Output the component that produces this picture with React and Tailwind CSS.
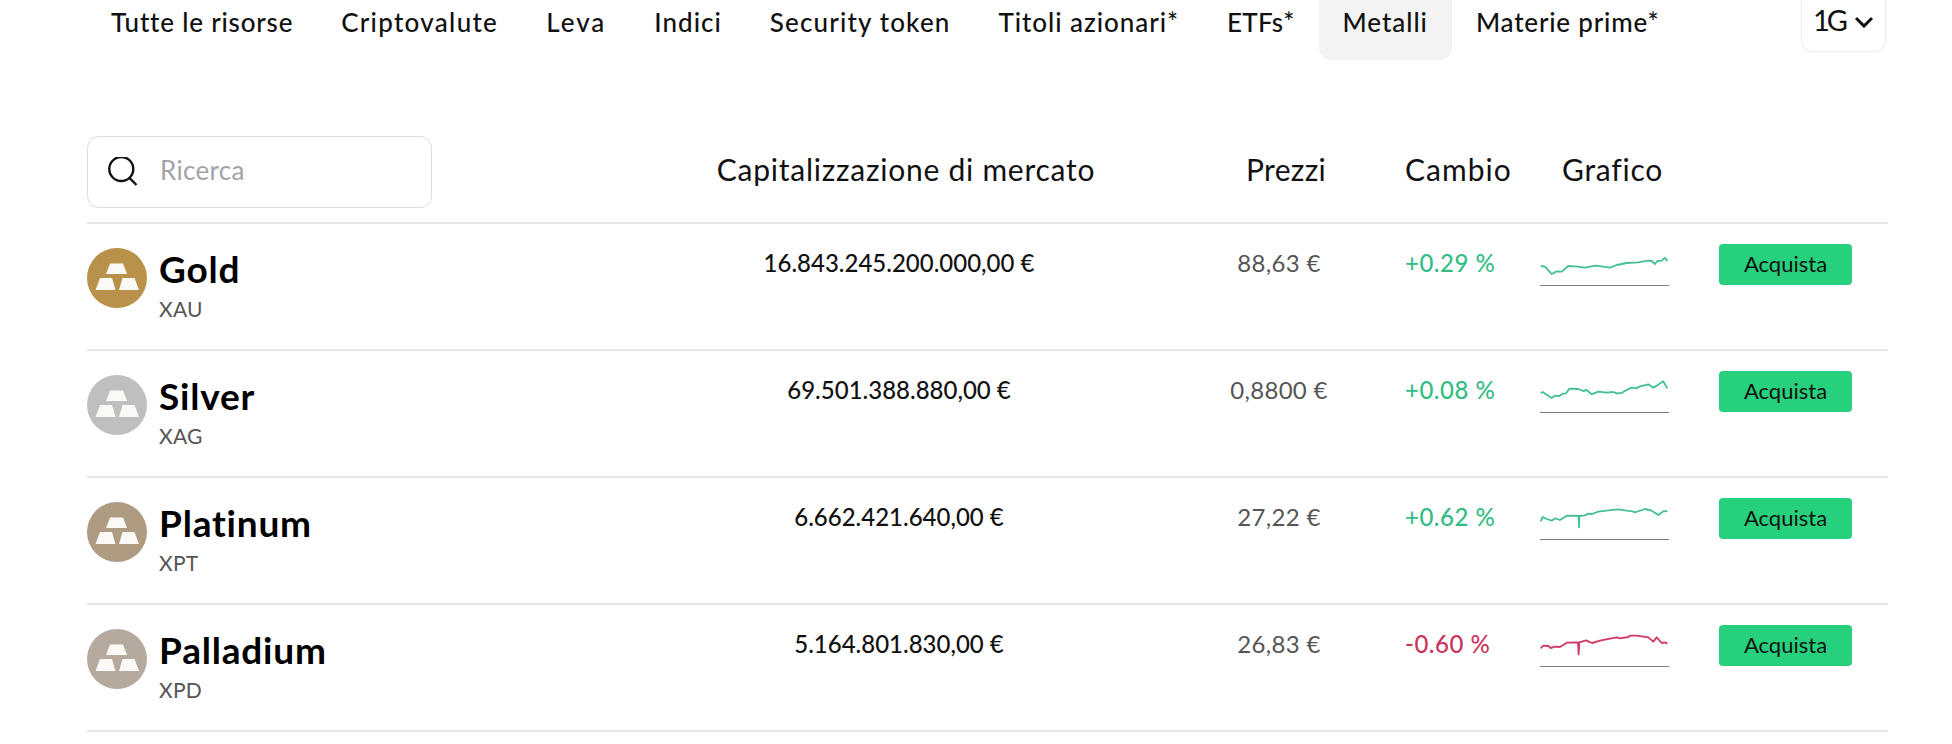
import React from "react";

// tracking differs per tab so the labels keep the widths of the original typeface
const tabs = [
  { label: "Tutte le risorse", track: "tracking-[0.8px]" },
  { label: "Criptovalute", track: "tracking-[1.3px]" },
  { label: "Leva", track: "tracking-[2px]" },
  { label: "Indici", track: "tracking-[1px]" },
  { label: "Security token", track: "tracking-[1.15px]" },
  { label: "Titoli azionari*", track: "tracking-[0.95px]" },
  { label: "ETFs*", track: "tracking-[0.3px]" },
  { label: "Metalli", track: "tracking-[0.95px]" },
  { label: "Materie prime*", track: "tracking-[0.8px]" },
];

// chart points are in 3x units, y measured from the top of the row
const rows = [
  {
    name: "Gold",
    code: "XAU",
    color: "bg-[#b8924a]",
    cap: "16.843.245.200.000,00 €",
    price: "88,63 €",
    change: "+0.29 %",
    up: true,
    points:
      "62,126 75,128 95,150 110,142 125,143 145,126 175,128 195,131 225,125 250,128 270,131 290,123 320,117 355,115 385,110 395,111 405,120 412,111 425,110 435,101 442,111",
  },
  {
    name: "Silver",
    code: "XAG",
    color: "bg-[#bfbfbf]",
    cap: "69.501.388.880,00 €",
    price: "0,8800 €",
    change: "+0.08 %",
    up: true,
    points:
      "62,126 68,123 80,131 95,141 105,134 118,135 128,128 138,127 148,113 175,114 190,120 200,117 215,130 235,122 260,125 280,123 290,127 305,126 318,118 335,110 348,112 360,106 385,100 400,110 412,103 430,91 442,112",
  },
  {
    name: "Platinum",
    code: "XPT",
    color: "bg-[#ae9b82]",
    cap: "6.662.421.640,00 €",
    price: "27,22 €",
    change: "+0.62 %",
    up: true,
    points:
      "62,130 68,117 80,123 95,128 105,121 120,126 140,113 176,114 177,148 178,114 195,112 205,107 216,108 235,101 265,97 295,94 320,98 338,100 345,103 375,93 395,98 415,111 430,100 442,99",
  },
  {
    name: "Palladium",
    code: "XPD",
    color: "bg-[#b5aa9d]",
    cap: "5.164.801.830,00 €",
    price: "26,83 €",
    change: "-0.60 %",
    up: false,
    points:
      "62,130 70,122 85,123 92,129 105,125 120,126 140,113 174,112 176,148 178,112 198,106 216,114 240,107 270,101 290,97 300,100 325,96 330,92 350,92 385,97 400,110 410,97 425,114 435,112 442,116",
  },
];

function BarsIcon() {
  return (
    <svg viewBox="0 0 60 60" className="h-[60px] w-[60px]">
      <path d="M23 15.5h13l4 10.5H19z" fill="#fbf9f5" />
      <path d="M13 30h12l3.5 12H8.5z" fill="#fbf9f5" />
      <path d="M35.5 30h12l4.5 12H32z" fill="#fbf9f5" />
    </svg>
  );
}

function Spark({ points, up }) {
  return (
    <svg viewBox="60 0 390 210" className="block h-[70px] w-[130px]">
      <line x1="60" y1="184.5" x2="447" y2="184.5" stroke="#7a7a7a" strokeWidth="3" />
      <polyline
        points={points}
        fill="none"
        stroke={up ? "#45c093" : "#d13a63"}
        strokeWidth="5.5"
        strokeLinejoin="round"
      />
    </svg>
  );
}

export default function App() {
  return (
    <div className="h-[744px] w-[1952px] overflow-hidden bg-white pr-[64px] pl-[87px] font-[Lato,sans-serif] text-[#111]">
      {/* top tabs */}
      <div className="flex h-[60px] items-start">
        {tabs.map((t) => (
          <div
            key={t.label}
            className={`h-[60px] px-6 pt-[8px] text-[26px] leading-[28px] font-medium whitespace-nowrap ${t.track} ${
              t.label === "Metalli" ? "rounded-b-xl bg-[#f3f3f3]" : ""
            }`}
          >
            {t.label}
          </div>
        ))}
        <div className="mr-[2px] ml-auto flex h-[52px] w-[85px] items-start justify-center gap-[9px] rounded-b-xl border border-t-0 border-[#eeeeee] pt-[4px] shadow-[0_1px_2px_rgba(0,0,0,0.04)]">
          <span className="text-[29px] leading-[32px] tracking-[-3px]">1G</span>
          <svg viewBox="0 0 20 12" className="mt-[12px] h-[12px] w-[20px]">
            <path d="M2 2l8 8 8-8" fill="none" stroke="#111" strokeWidth="3" />
          </svg>
        </div>
      </div>

      {/* table head */}
      <div className="mt-[76px] grid grid-cols-[540px_544px_216px_153px_130px_1fr] items-center border-b-2 border-[#e8e8e8] pb-[14px]">
        <div className="flex h-[72px] w-[345px] items-center rounded-xl border border-[#dddddd] pl-[20px]">
          <svg viewBox="0 0 30 30" className="h-[30px] w-[30px]">
            <circle cx="13.3" cy="12" r="12" fill="none" stroke="#111" strokeWidth="2.4" />
            <path d="M21.5 21l7 7" stroke="#111" strokeWidth="2.4" />
          </svg>
          <input
            placeholder="Ricerca"
            className="mb-[4px] ml-[22px] w-[200px] bg-transparent text-[26px] tracking-[0.3px] outline-none placeholder:text-[#a3a3aa]"
          />
        </div>
        <div className="mb-[7px] pl-[14px] text-center text-[30px] leading-[34px] tracking-[0.75px]">
          Capitalizzazione di mercato
        </div>
        <div className="mb-[7px] pl-[14px] text-center text-[30px] leading-[34px] tracking-[0.3px]">Prezzi</div>
        <div className="mb-[7px] pl-[18px] text-[30px] leading-[34px] tracking-[1px]">Cambio</div>
        <div className="mb-[7px] pl-[22px] text-[30px] leading-[34px] tracking-[0.75px]">Grafico</div>
        <div />
      </div>

      {/* metals */}
      {rows.map((r) => (
        <div
          key={r.code}
          className="grid h-[127px] grid-cols-[540px_544px_216px_153px_130px_1fr] items-start border-b-2 border-[#e8e8e8]"
        >
          <div className="mt-6 flex gap-[12px]">
            <div className={`h-[60px] w-[60px] rounded-full ${r.color}`}>
              <BarsIcon />
            </div>
            <div>
              <div className="mt-[-1px] text-[37px] leading-[44px] font-bold tracking-[0.8px] text-black">{r.name}</div>
              <div className="mt-[6px] text-[21px] leading-[24px] tracking-[0.3px] text-[#555555]">{r.code}</div>
            </div>
          </div>
          <div className="mt-[25px] text-center text-[24px] leading-[28px] font-medium">{r.cap}</div>
          <div className="mt-[25px] text-center text-[24px] leading-[28px] tracking-[0.3px] text-[#555555]">
            {r.price}
          </div>
          <div
            className={`mt-[25px] pl-[18px] text-[24px] leading-[28px] font-medium tracking-[0.5px] ${
              r.up ? "text-[#33bd85]" : "text-[#c9345c]"
            }`}
          >
            {r.change}
          </div>
          <Spark points={r.points} up={r.up} />
          <button className="mt-5 ml-[49px] flex h-[41px] w-[133px] items-center justify-center rounded-[4px] bg-[#26d07c] pb-[3px] text-[22px] text-[#111]">
            Acquista
          </button>
        </div>
      ))}
    </div>
  );
}
